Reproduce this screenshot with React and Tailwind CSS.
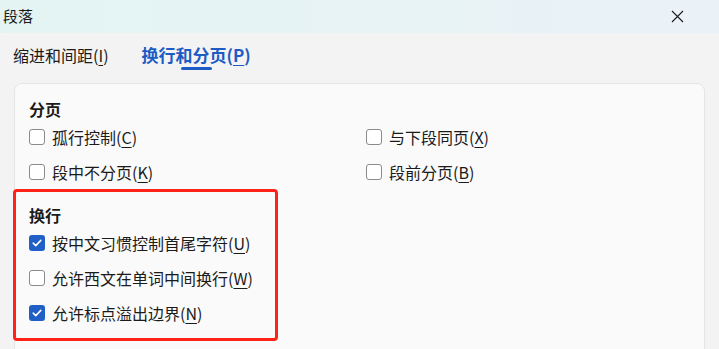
import React from 'react';

const font = { fontFamily: '"Noto Sans CJK SC", "Noto Sans", sans-serif' };

const Check = ({ checked }) =>
  checked ? (
    <span className="w-[16px] h-[16px] rounded-[3px] bg-[#1f5fc6] flex items-center justify-center shrink-0">
      <svg width="10" height="8" viewBox="0 0 10 8" fill="none">
        <path d="M1.2 4.2 L3.8 6.6 L8.8 1.4" stroke="white" strokeWidth="1.6" strokeLinecap="round" strokeLinejoin="round" />
      </svg>
    </span>
  ) : (
    <span className="w-[16px] h-[16px] rounded-[3px] border border-[#8b8b8b] bg-white shrink-0" />
  );

const Option = ({ label, hot, checked }) => (
  <div className="h-[35px] flex items-center gap-[7px]">
    <Check checked={checked} />
    <span className="text-[16px] text-[#1b1b1b] leading-none">
      {label}(<span className="underline underline-offset-[3px]">{hot}</span>)
    </span>
  </div>
);

export default function App() {
  return (
    <div className="w-[719px] h-[349px] overflow-hidden bg-[#f3f3f3] relative" style={font}>
      {/* title bar */}
      <div className="h-[33px] bg-gradient-to-r from-[#e4f4f3] to-[#eaf2f7] flex items-center justify-between pl-[3px] pr-[35px]">
        <span className="text-[15px] text-[#1b1b1b]">段落</span>
        <svg width="13" height="13" viewBox="0 0 13 13">
          <path d="M1 1 L12 12 M12 1 L1 12" stroke="#1b1b1b" strokeWidth="1.1" />
        </svg>
      </div>

      {/* tabs */}
      <div className="flex pl-[13px] pt-[12px] h-[50px]">
        <div className="text-[16px] leading-[20px] text-[#1b1b1b]">
          缩进和间距(<span className="underline underline-offset-[3px]">I</span>)
        </div>
        <div className="ml-[33px] flex flex-col items-center">
          <div className="text-[17px] leading-[20px] font-semibold text-[#1d5cc4]">
            换行和分页(<span className="underline underline-offset-[3px]">P</span>)
          </div>
          <div className="mt-[2px] w-[31px] h-[3px] rounded-full bg-[#1d5cc4]" />
        </div>
      </div>

      {/* card */}
      <div className="mx-[14px] w-[691px] h-[300px] rounded-[8px] border border-[#e5e5e5] bg-[#fafafa] pt-[15px] px-[14px]">
        <div className="text-[16px] leading-[20px] font-bold text-[#1b1b1b]">分页</div>
        <div className="grid grid-cols-[337px_1fr]">
          <Option label="孤行控制" hot="C" />
          <Option label="与下段同页" hot="X" />
          <Option label="段中不分页" hot="K" />
          <Option label="段前分页" hot="B" />
        </div>

        <div className="mt-[16px] text-[16px] leading-[20px] font-bold text-[#1b1b1b]">换行</div>
        <div>
          <Option label="按中文习惯控制首尾字符" hot="U" checked />
          <Option label="允许西文在单词中间换行" hot="W" />
          <Option label="允许标点溢出边界" hot="N" checked />
        </div>
      </div>

      {/* annotation box */}
      <div className="absolute left-[13px] top-[189px] w-[265px] h-[152px] border-[3px] border-[#ff2317] rounded-[4px] pointer-events-none" />
    </div>
  );
}
